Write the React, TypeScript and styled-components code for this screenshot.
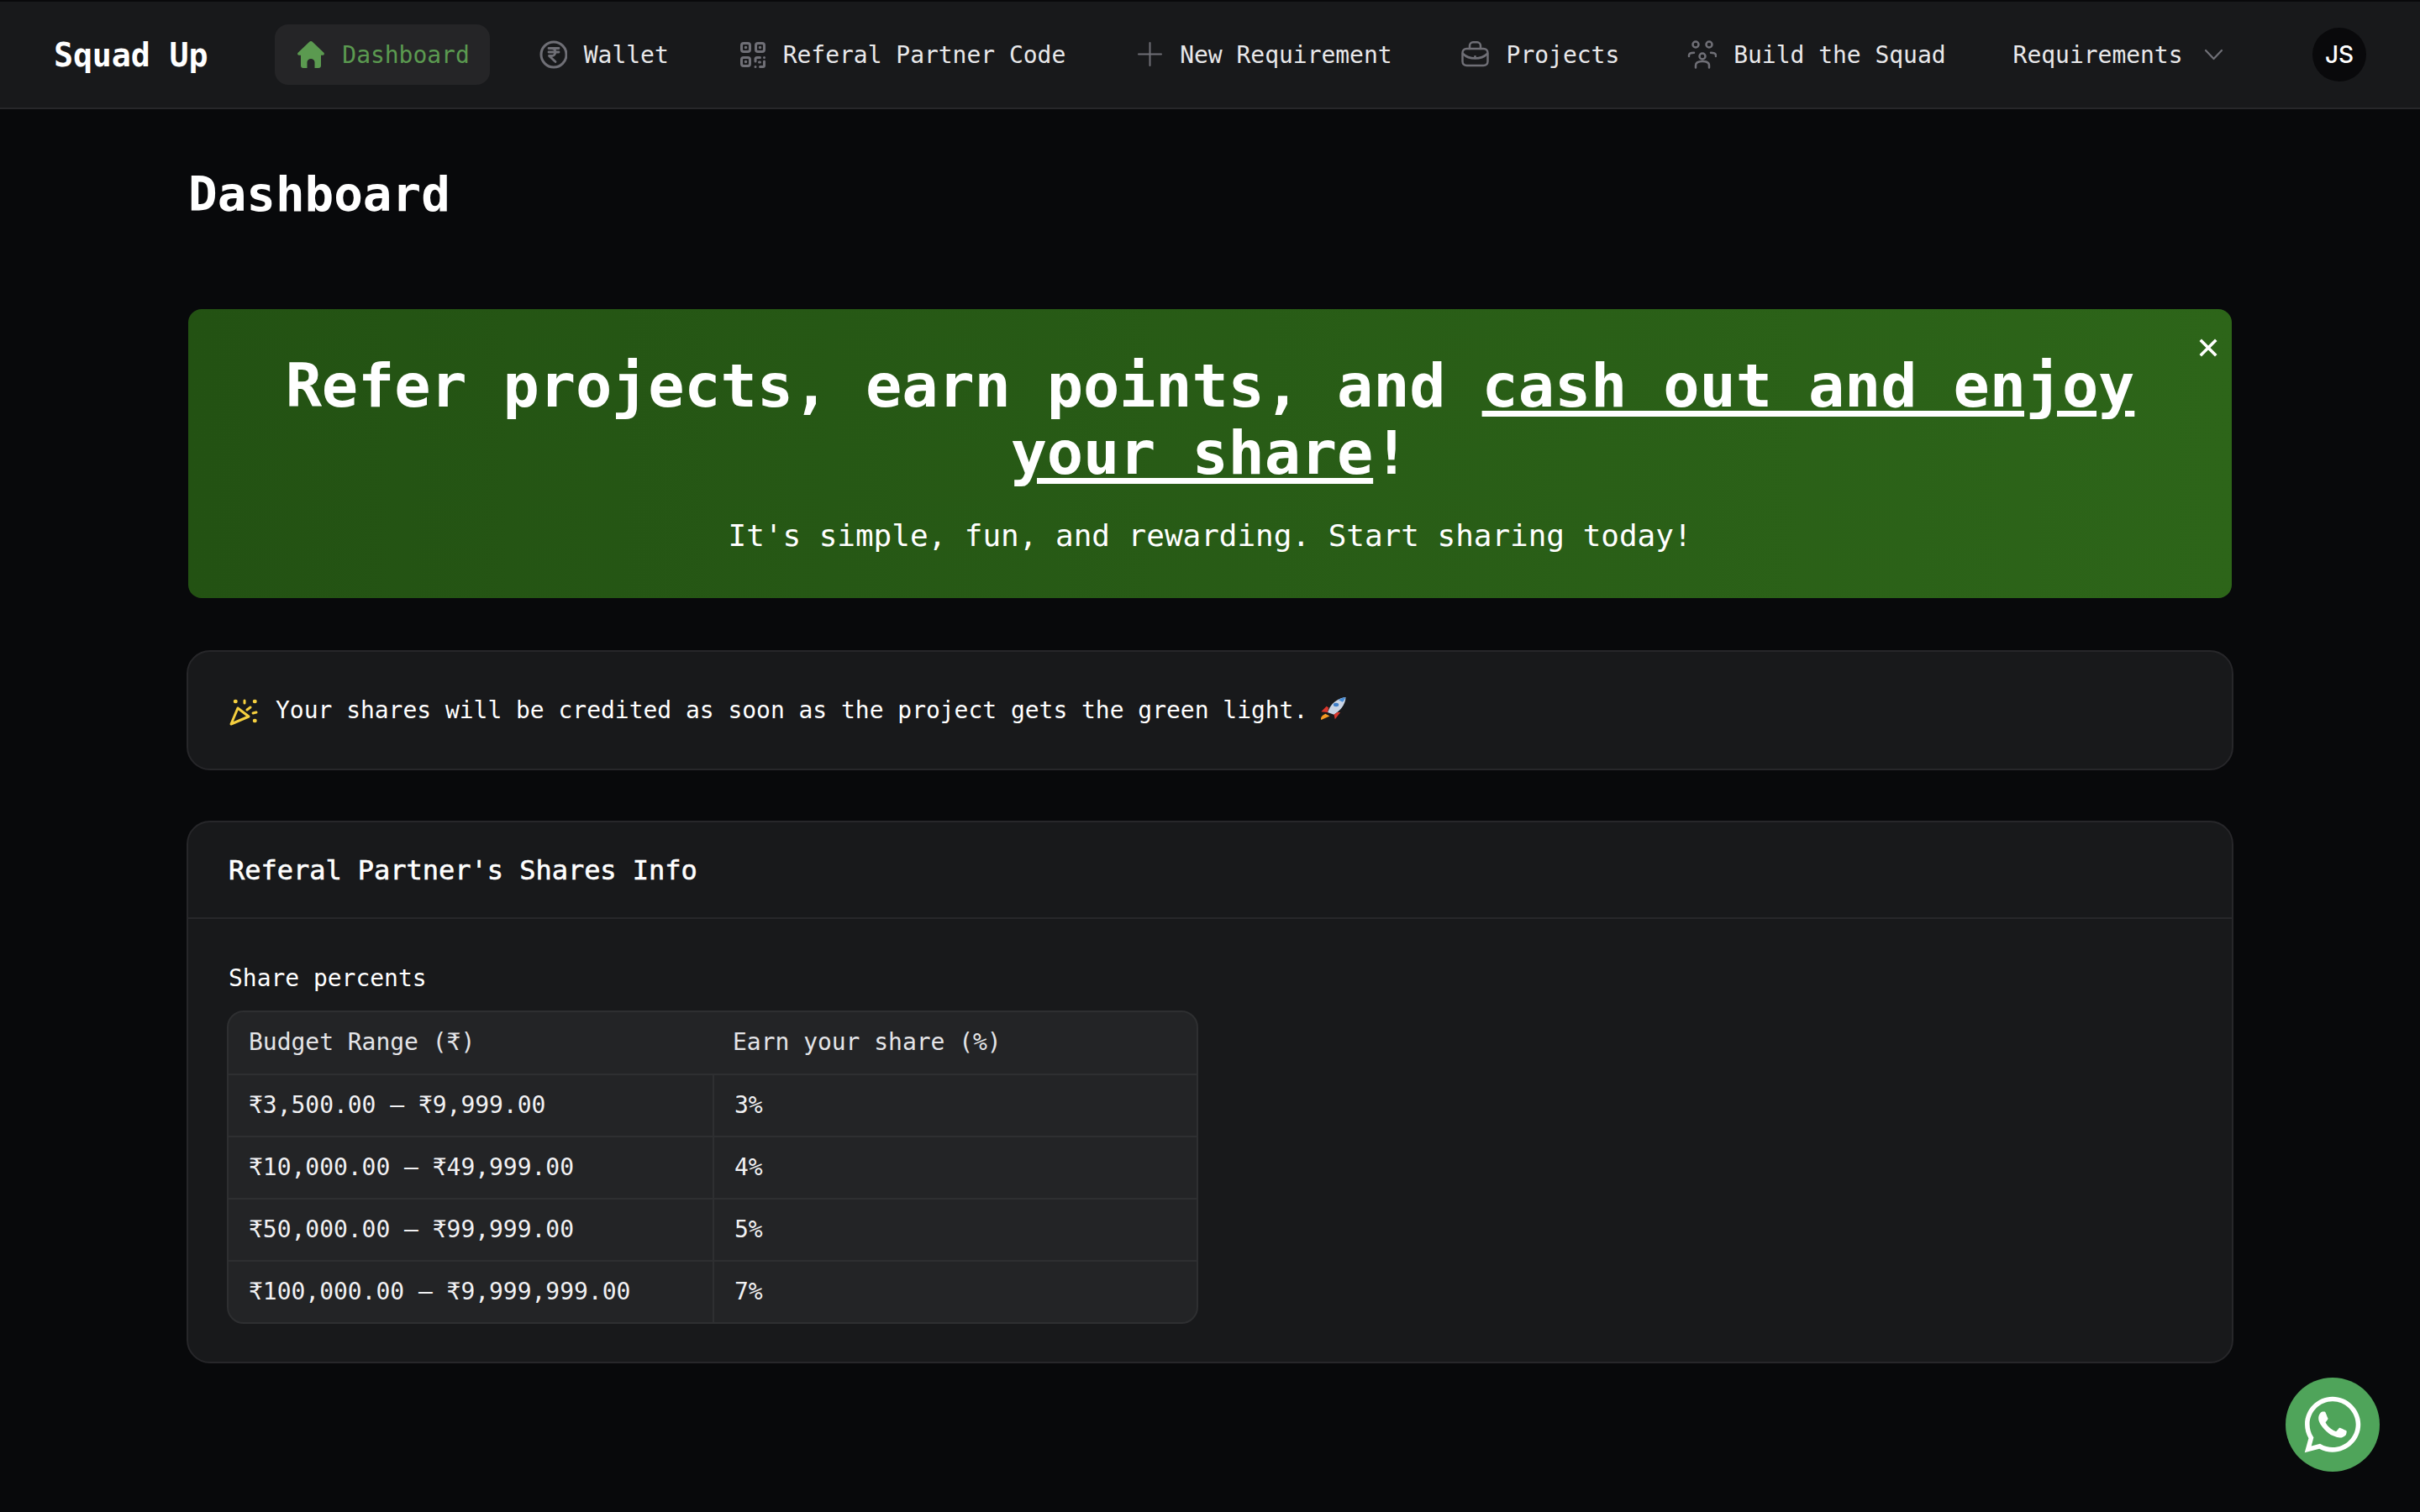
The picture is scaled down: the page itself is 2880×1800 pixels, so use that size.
import React from "react";
import styled, { createGlobalStyle } from "styled-components";
import { FaWhatsapp } from "react-icons/fa";

const mono = `"DejaVu Sans Mono", "Liberation Mono", monospace`;

const GlobalStyle = createGlobalStyle`
  html, body {
    margin: 0;
    padding: 0;
    background: #08090b;
  }
  body {
    font-family: ${mono};
    letter-spacing: -0.002em;
    color: #fff;
  }
  * {
    box-sizing: border-box;
  }
`;

const Page = styled.div`
  min-height: 1800px;
  background: #08090b;
`;

const Header = styled.header`
  height: 130px;
  display: flex;
  align-items: center;
  padding: 0 64px;
  background: #18191b;
  border-top: 2px solid #09090b;
  border-bottom: 2px solid #27272a;
`;

const Logo = styled.div`
  font-size: 38.4px;
  font-weight: 700;
  letter-spacing: -0.2px;
  margin-right: 80px;
  white-space: nowrap;
`;

const Nav = styled.nav`
  flex: 1;
  display: flex;
  align-items: center;
  gap: 32px;
`;

const NavItem = styled.div<{ $active?: boolean }>`
  height: 72px;
  display: flex;
  align-items: center;
  gap: 20px;
  padding: 0 24px;
  border-radius: 16px;
  font-size: 28px;
  white-space: nowrap;
  background: ${(p) => (p.$active ? "#252527" : "transparent")};
  color: ${(p) => (p.$active ? "#5b9a50" : "#e8e8ea")};
  svg {
    flex: none;
    width: 36px;
    height: 36px;
    color: ${(p) => (p.$active ? "#5b9a50" : "#6f6f76")};
  }
`;

const Avatar = styled.div`
  flex: none;
  width: 64px;
  height: 64px;
  border-radius: 50%;
  background: #09090b;
  display: flex;
  align-items: center;
  justify-content: center;
  font-family: "Inter", sans-serif;
  font-weight: 500;
  font-size: 28px;
`;

const Main = styled.main`
  width: 2436px;
  margin: 0 auto;
  display: flex;
  flex-direction: column;
`;

const Title = styled.h1`
  margin: 66px 0 0;
  padding-left: 2px;
  font-size: 57.6px;
  line-height: 72px;
  font-weight: 700;
`;

const Hero = styled.section`
  position: relative;
  margin: 100px 2px 0;
  height: 344px;
  padding: 51px 96px 0;
  border-radius: 16px;
  background: linear-gradient(90deg, #235213, #2d6519);
  text-align: center;
`;

const HeroTitle = styled.h2`
  margin: 0;
  font-size: 72px;
  line-height: 80px;
  font-weight: 700;
  letter-spacing: -0.2px;
  u {
    text-underline-offset: 5px;
    text-decoration-thickness: 7px;
  }
`;

const HeroText = styled.p`
  margin: 35px 0 0;
  font-size: 36px;
  line-height: 48px;
`;

const Close = styled.div`
  position: absolute;
  top: 34px;
  right: 16px;
  width: 24px;
  height: 24px;
  svg {
    display: block;
    width: 24px;
    height: 24px;
  }
`;

const Card = styled.section`
  margin-top: 60px;
  background: #18191b;
  border: 2px solid #27272a;
  border-radius: 28px;
`;

const Notice = styled(Card)`
  margin-top: 62px;
  height: 143px;
  padding: 0 48px;
  display: flex;
  align-items: center;
  gap: 20px;
  font-size: 28px;
  svg {
    flex: none;
  }
`;

const NoticeRocket = styled.svg`
  margin: 0 0 5px -10px;
`;

const CardHead = styled.div`
  height: 115px;
  padding: 0 48px;
  display: flex;
  align-items: center;
  font-size: 32px;
  -webkit-text-stroke: 0.6px #fff;
  border-bottom: 2px solid #27272a;
`;

const CardBody = styled.div`
  padding: 51px 48px 45px;
`;

const Label = styled.div`
  font-size: 28px;
  line-height: 40px;
  margin-bottom: 18px;
`;

const Table = styled.div`
  width: 1156px;
  margin-left: -2px;
  background: #232426;
  border: 2px solid #2e2f31;
  border-radius: 20px;
  overflow: hidden;
`;

const Row = styled.div<{ $head?: boolean }>`
  height: ${(p) => (p.$head ? "73px" : "74px")};
  display: grid;
  grid-template-columns: 1fr 1fr;
  font-size: 28px;
  color: ${(p) => (p.$head ? "#e4e4e7" : "#f1f1f3")};
  & + & {
    border-top: 2px solid #2e2f31;
  }
`;

const Cell = styled.div<{ $divider?: boolean }>`
  display: flex;
  align-items: center;
  padding: 0 24px 2px;
  border-left: ${(p) => (p.$divider ? "2px solid #2e2f31" : "none")};
`;

const Fab = styled.div`
  position: fixed;
  right: 48px;
  bottom: 48px;
  width: 112px;
  height: 112px;
  border-radius: 50%;
  background: #4fa45a;
  display: flex;
  align-items: center;
  justify-content: center;
  color: #fff;
  svg {
    width: 76px;
    height: 76px;
  }
`;

const HomeIcon = () => (
  <svg viewBox="-3 0 36 36" fill="currentColor">
    <path d="M16 2c.8 0 1.400.3 2 .9L31.400 15.800c1.100 1.100.3 3-1.200 3H28V31a3 3 0 0 1-3 3h-4.500V27a4.500 4 0 0 0-9 0v7H7a3 3 0 0 1-3-3V18.800H1.800c-1.500 0-2.300-1.900-1.200-3L14 2.900c.6-.6 1.200-.9 2-.9z" />
  </svg>
);

const RupeeIcon = () => (
  <svg viewBox="0 0 36 36" fill="none" stroke="currentColor" strokeWidth="3" strokeLinecap="round" strokeLinejoin="round">
    <circle cx="20" cy="18" r="15" />
    <path d="M14 10.500h12M14 15h12M14.500 10.500h3a4.500 4.500 0 0 1 0 9h-3l7.500 7" strokeWidth="2.800" />
  </svg>
);

const QrIcon = () => (
  <svg viewBox="0 0 36 36" fill="none" stroke="currentColor" strokeWidth="3" strokeLinecap="round" strokeLinejoin="round">
    <rect x="6.500" y="4.500" width="10" height="10" rx="2.500" />
    <rect x="23.500" y="4.500" width="10" height="10" rx="2.500" />
    <rect x="6.500" y="21.500" width="10" height="10" rx="2.500" />
    <path d="M23 26v-2.500a2 2 0 0 1 2-2h3.500M33.500 21.500v.1M33.500 26v5a1.500 1.500 0 0 1-1.500 1.500h-3.500M23 32.500v-.1M27.500 27h1" />
    <path d="M11.500 9.400v.2M28.500 9.400v.2M11.500 26.400v.2" strokeWidth="3.500" />
  </svg>
);

const PlusIcon = () => (
  <svg viewBox="0 0 36 36" fill="none" stroke="currentColor" strokeWidth="2" strokeLinecap="round">
    <path d="M20.500 4v27M7 17.500h27" />
  </svg>
);

const CaseIcon = () => (
  <svg viewBox="0 0 36 36" fill="none" stroke="currentColor" strokeWidth="2.500" strokeLinecap="round" strokeLinejoin="round">
    <path d="M3.500 16c0-3 2-5 5-5h20c3 0 5 2 5 5v10c0 3-2 5-5 5h-20c-3 0-5-2-5-5z" />
    <path d="M12 11V7.500c0-2.300 1.800-4.250 4-4.250h5c2.200 0 4 1.950 4 4.250V11" />
    <path d="M4 17c4 4 9 5.500 14.500 5.500S29 21 33 17" />
    <path d="M18.500 20.500v.2" strokeWidth="2.800" />
  </svg>
);

const SquadIcon = () => (
  <svg viewBox="0 0 36 36" fill="none" stroke="currentColor" strokeWidth="2.500" strokeLinecap="round" strokeLinejoin="round">
    <circle cx="11" cy="6" r="3.500" />
    <circle cx="27" cy="6" r="3.500" />
    <circle cx="19" cy="20" r="3.500" />
    <path d="M3 20v-1c0-2 2-3.200 6-3.200M35 20v-1c0-2-2-3.200-6-3.200" />
    <path d="M11 33.500V31c0-3 3-5 8-5s8 2 8 5v2.500" />
  </svg>
);

const ChevronIcon = () => (
  <svg viewBox="0 0 36 36" fill="none" stroke="currentColor" strokeWidth="2.200" strokeLinecap="round" strokeLinejoin="round">
    <path d="M7 13l9.500 10L26 13" />
  </svg>
);

const CloseIcon = () => (
  <svg viewBox="0 0 24 24" fill="none" stroke="#fff" strokeWidth="3.600" strokeLinecap="square">
    <path d="M4 4l16 16M20 4L4 20" />
  </svg>
);

const PopperIcon = () => (
  <svg width="36" height="36" viewBox="0 0 36 36" fill="none" stroke="#f5cf3f" strokeWidth="3" strokeLinecap="round" strokeLinejoin="round">
    <path d="M11 15l13 10-21 9z" />
    <path d="M19 6v3M22 17l4-3M29 21l4-1" />
    <path d="M8 7h.5M31 7h.5M31 30h.5" strokeWidth="4.500" />
  </svg>
);

const RocketIcon = () => (
  <NoticeRocket width="38" height="29" viewBox="0 0 30 32" preserveAspectRatio="none">
    <path d="M28 1c-6 1-12 6-15 14l-2 6 6 3 3-3c5-6 8-13 8-20z" fill="#c9d4e4" />
    <path d="M28 1c-3 .5-5 2-7 3.500l4 3c1.500-2 2.500-4 3-6.500z" fill="#4a8fd8" />
    <circle cx="19" cy="11" r="2.500" fill="#3f7fc9" />
    <path d="M11 21l-6-1 5-7 2 2zM17 24l1 6 5-9-3 0z" fill="#d8362c" />
    <path d="M9 23l4 3-8 5c-1-3 1-6 4-8z" fill="#f59a23" />
  </NoticeRocket>
);

const rows = [
  ["₹3,500.00 – ₹9,999.00", "3%"],
  ["₹10,000.00 – ₹49,999.00", "4%"],
  ["₹50,000.00 – ₹99,999.00", "5%"],
  ["₹100,000.00 – ₹9,999,999.00", "7%"],
];

const App = () => {
  return (
    <Page>
      <GlobalStyle />
      <Header>
        <Logo>Squad Up</Logo>
        <Nav>
          <NavItem $active><HomeIcon />Dashboard</NavItem>
          <NavItem><RupeeIcon />Wallet</NavItem>
          <NavItem><QrIcon />Referal Partner Code</NavItem>
          <NavItem><PlusIcon />New Requirement</NavItem>
          <NavItem><CaseIcon />Projects</NavItem>
          <NavItem><SquadIcon />Build the Squad</NavItem>
          <NavItem>Requirements<ChevronIcon /></NavItem>
        </Nav>
        <Avatar>JS</Avatar>
      </Header>
      <Main>
        <Title>Dashboard</Title>
        <Hero>
          <Close><CloseIcon /></Close>
          <HeroTitle>
            Refer projects, earn points, and <u>cash out and enjoy your share</u>!
          </HeroTitle>
          <HeroText>It's simple, fun, and rewarding. Start sharing today!</HeroText>
        </Hero>
        <Notice>
          <PopperIcon />
          <span>Your shares will be credited as soon as the project gets the green light.</span>
          <RocketIcon />
        </Notice>
        <Card>
          <CardHead>Referal Partner's Shares Info</CardHead>
          <CardBody>
            <Label>Share percents</Label>
            <Table>
              <Row $head>
                <Cell>Budget Range (₹)</Cell>
                <Cell>Earn your share (%)</Cell>
              </Row>
              {rows.map(([range, share]) => (
                <Row key={range}>
                  <Cell>{range}</Cell>
                  <Cell $divider>{share}</Cell>
                </Row>
              ))}
            </Table>
          </CardBody>
        </Card>
      </Main>
      <Fab><FaWhatsapp /></Fab>
    </Page>
  );
};

export default App;
